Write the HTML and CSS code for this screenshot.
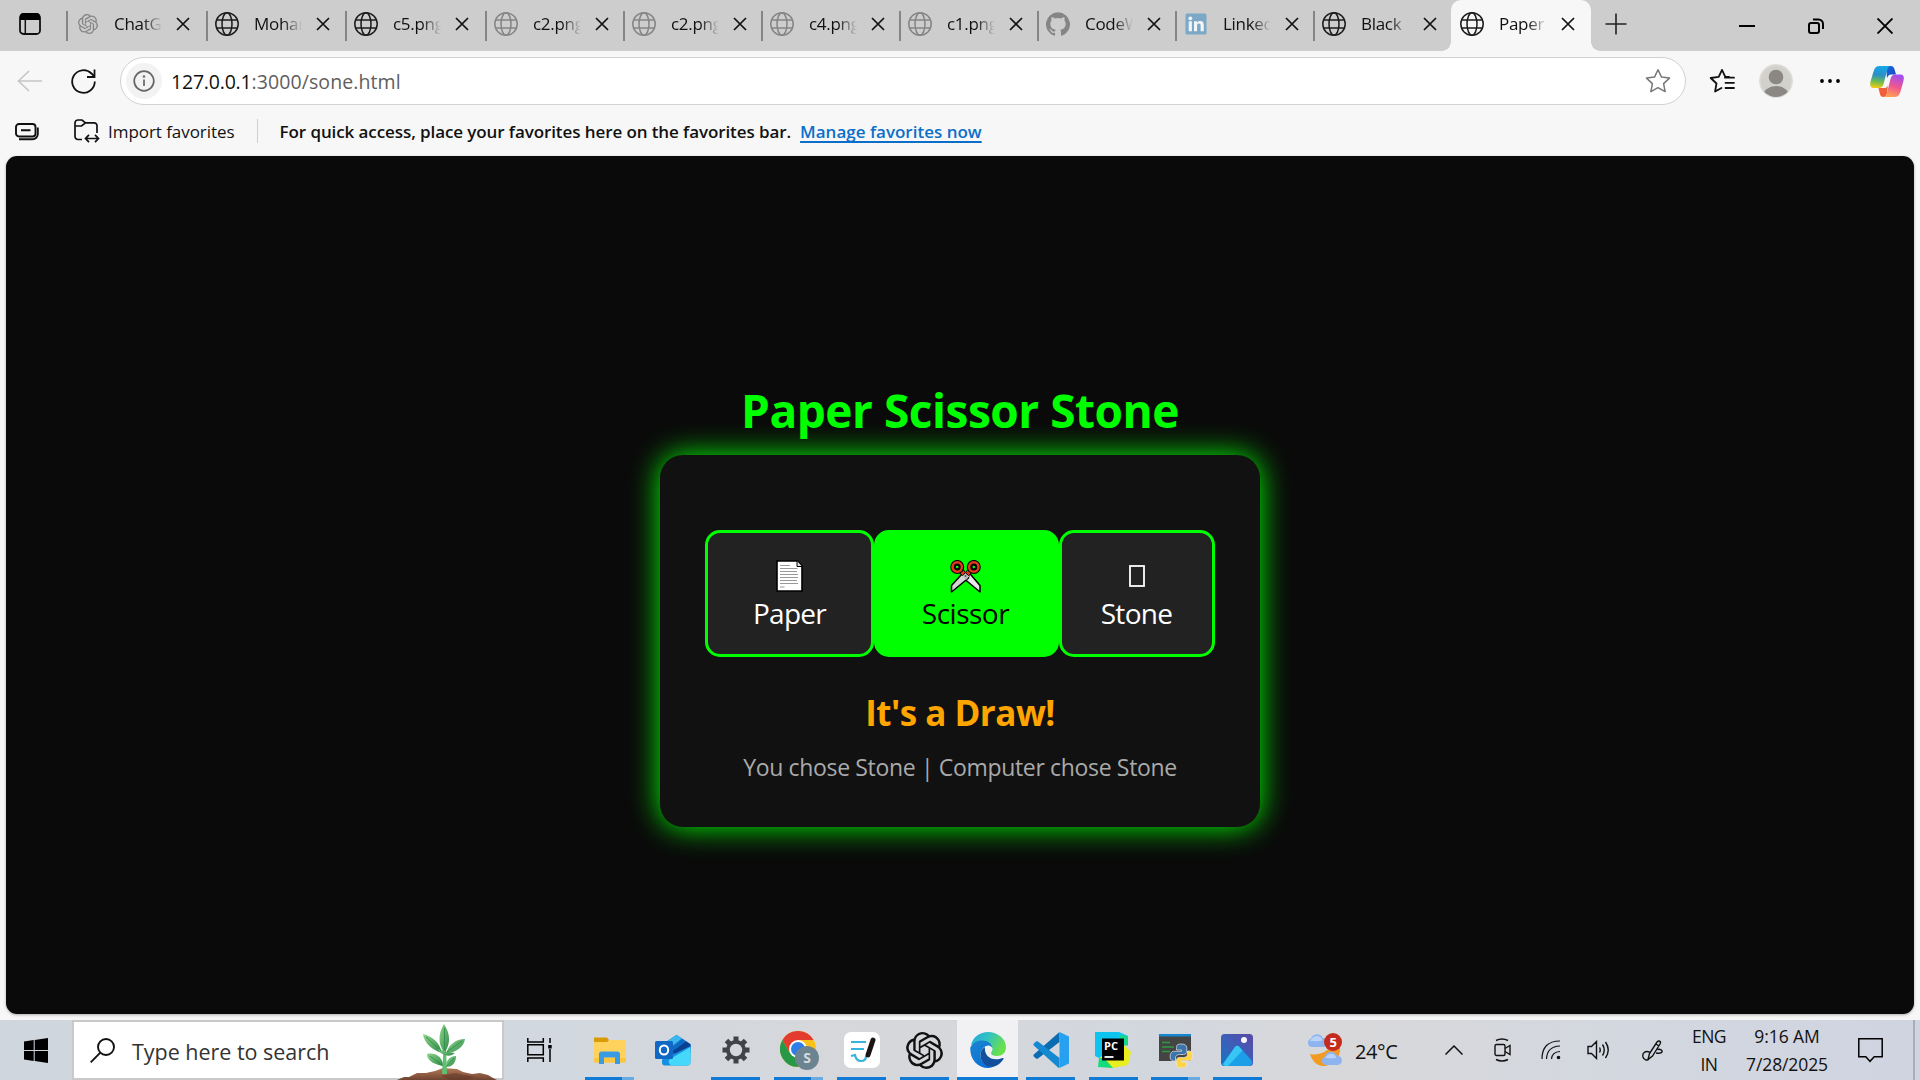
FILE: index.html
```html
<!DOCTYPE html>
<html lang="en">
<head>
<meta charset="utf-8">
<title>Paper Scissor Stone</title>
<link rel="stylesheet" href="styles.css">
</head>
<body>
<svg width="0" height="0" class="defs">
  <symbol id="globe" viewBox="0 0 24 24"><g fill="none" stroke="currentColor" stroke-width="1.5"><circle cx="12" cy="12" r="11.2"/><ellipse cx="12" cy="12" rx="5" ry="11.2"/><path d="M1.6 8h20.8M1.6 16h20.8"/></g></symbol>
  <symbol id="x" viewBox="0 0 14 14"><path d="M1 1l12 12M13 1L1 13" fill="none" stroke="#111" stroke-width="1.7"/></symbol>
  <symbol id="knot" viewBox="0 0 24 24"><path fill="currentColor" d="M22.28 9.82a5.98 5.98 0 0 0-.52-4.91 6.05 6.05 0 0 0-6.51-2.9A6.07 6.07 0 0 0 4.98 4.18a5.98 5.98 0 0 0-4 2.9 6.05 6.05 0 0 0 .74 7.1 5.98 5.98 0 0 0 .51 4.91 6.05 6.05 0 0 0 6.52 2.9A5.98 5.98 0 0 0 13.26 24a6.06 6.06 0 0 0 5.77-4.21 5.99 5.99 0 0 0 4-2.9 6.06 6.06 0 0 0-.75-7.07zm-9.02 12.61a4.48 4.48 0 0 1-2.88-1.04l.14-.08 4.78-2.76a.8.8 0 0 0 .39-.68v-6.74l2.02 1.17a.07.07 0 0 1 .04.05v5.58a4.5 4.5 0 0 1-4.49 4.5zm-9.66-4.13a4.47 4.47 0 0 1-.53-3.01l.14.09 4.78 2.76a.77.77 0 0 0 .78 0l5.84-3.37v2.33a.08.08 0 0 1-.03.06L9.74 19.95a4.5 4.5 0 0 1-6.14-1.65zM2.34 7.9a4.49 4.49 0 0 1 2.37-1.98v5.68a.77.77 0 0 0 .39.68l5.81 3.35-2.02 1.17a.08.08 0 0 1-.07 0l-4.83-2.79A4.5 4.5 0 0 1 2.34 7.87zm16.6 3.86L13.1 8.36 15.12 7.2a.08.08 0 0 1 .07 0l4.83 2.79a4.49 4.49 0 0 1-.68 8.1v-5.67a.79.79 0 0 0-.4-.66zm2.01-3.02-.14-.09-4.77-2.78a.78.78 0 0 0-.79 0L9.41 9.23V6.9a.07.07 0 0 1 .03-.06l4.83-2.79a4.5 4.5 0 0 1 6.68 4.66zM8.31 12.86 6.29 11.7a.08.08 0 0 1-.04-.06V6.07a4.5 4.5 0 0 1 7.38-3.45l-.14.08-4.78 2.76a.8.8 0 0 0-.4.68zm1.1-2.37L12 9l2.61 1.5v3L12 15l-2.6-1.5z"/></symbol>
</svg>

<header class="tabstrip">
  <svg class="workspaces" width="22" height="24" viewBox="0 0 22 24"><rect x="1" y="2" width="20" height="20" rx="3.5" fill="none" stroke="#111" stroke-width="1.8"/><path d="M1 8V5a4 4 0 0 1 4-4h12a4 4 0 0 1 4 4v3z" fill="#000"/><path d="M6.3 8v14" stroke="#111" stroke-width="1.5"/></svg>
  <div class="tab tab--140 tab--small"><svg class="tab-icon dim"><use href="#knot"/></svg><span class="tab-title">ChatG</span><svg class="tab-close"><use href="#x"/></svg></div>
  <div class="tab tab--139"><svg class="tab-icon"><use href="#globe"/></svg><span class="tab-title">Mohan</span><svg class="tab-close"><use href="#x"/></svg></div>
  <div class="tab tab--140"><svg class="tab-icon"><use href="#globe"/></svg><span class="tab-title">c5.png</span><svg class="tab-close"><use href="#x"/></svg></div>
  <div class="tab"><svg class="tab-icon dim"><use href="#globe"/></svg><span class="tab-title">c2.png</span><svg class="tab-close"><use href="#x"/></svg></div>
  <div class="tab"><svg class="tab-icon dim"><use href="#globe"/></svg><span class="tab-title">c2.png</span><svg class="tab-close"><use href="#x"/></svg></div>
  <div class="tab"><svg class="tab-icon dim"><use href="#globe"/></svg><span class="tab-title">c4.png</span><svg class="tab-close"><use href="#x"/></svg></div>
  <div class="tab"><svg class="tab-icon dim"><use href="#globe"/></svg><span class="tab-title">c1.png</span><svg class="tab-close"><use href="#x"/></svg></div>
  <div class="tab"><svg class="tab-icon dim" viewBox="0 0 24 24"><path fill="currentColor" d="M12 .3a12 12 0 0 0-3.8 23.38c.6.12.83-.26.83-.57v-2.24c-3.34.73-4.04-1.42-4.04-1.42-.55-1.38-1.34-1.75-1.34-1.75-1.08-.74.09-.73.09-.73 1.2.09 1.83 1.24 1.83 1.24 1.07 1.83 2.8 1.3 3.49 1 .1-.78.42-1.3.76-1.6-2.66-.3-5.47-1.33-5.47-5.93 0-1.3.47-2.38 1.24-3.22-.14-.3-.54-1.52.1-3.18 0 0 1.01-.32 3.3 1.23a11.5 11.5 0 0 1 6.02 0c2.28-1.55 3.29-1.23 3.29-1.23.64 1.66.24 2.88.12 3.18a4.65 4.65 0 0 1 1.23 3.22c0 4.61-2.8 5.63-5.48 5.92.42.36.81 1.1.81 2.22v3.29c0 .31.2.69.82.57A12 12 0 0 0 12 .3"/></svg><span class="tab-title">CodeW</span><svg class="tab-close"><use href="#x"/></svg></div>
  <div class="tab"><svg class="tab-icon" viewBox="0 0 24 24"><rect x="1.5" y="1.5" width="21" height="21" rx="1.5" fill="#7ba8c6"/><g fill="#f2f4f6"><circle cx="6.3" cy="6.3" r="1.9"/><path d="M4.7 9.3h3.2v10H4.7zM10 9.3h3v1.4c.6-1 1.7-1.7 3.1-1.7 3 0 3.7 2 3.7 4.6v5.7h-3.2v-5c0-1.3 0-2.7-1.7-2.7s-1.8 1.3-1.8 2.6v5.1H10z"/></g></svg><span class="tab-title">Linked</span><svg class="tab-close"><use href="#x"/></svg></div>
  <div class="tab"><svg class="tab-icon"><use href="#globe"/></svg><span class="tab-title">Black</span><svg class="tab-close"><use href="#x"/></svg></div>
  <div class="tab tab--140 tab--active"><svg class="tab-icon"><use href="#globe"/></svg><span class="tab-title">Paper</span><svg class="tab-close"><use href="#x"/></svg></div>
  <svg class="new-tab" width="22" height="22"><path d="M11 .5v21M.5 11h21" stroke="#222" stroke-width="1.6"/></svg>
  <div class="window-buttons">
    <svg width="16" height="16"><path d="M0 8h16" stroke="#000" stroke-width="2"/></svg>
    <svg width="16" height="16" fill="none" stroke="#000" stroke-width="2"><rect x="1" y="5" width="10" height="10" rx="2"/><path d="M5 1.5h5.5a4.5 4.5 0 0 1 4.500 4.5v5"/></svg>
    <svg width="16" height="16"><path d="M.5.5l15 15M15.500.5l-15 15" stroke="#000" stroke-width="1.9"/></svg>
  </div>
</header>

<nav class="toolbar">
  <svg class="back" width="25" height="22" fill="none" stroke="#c6c6c6" stroke-width="1.6"><path d="M25 11H1.5M12 1L1.500 11 12 21"/></svg>
  <svg class="reload" width="25" height="25" fill="none" stroke="#111" stroke-width="1.8"><path d="M23.800 12.500A11.300 11.300 0 1 1 20.500 4.500L23 7"/><path d="M23.500 .5V8H16"/></svg>
  <div class="address">
    <span class="site-info"><svg width="22" height="22" fill="none" stroke="#666" stroke-width="1.7"><circle cx="11" cy="11" r="9.800"/><path d="M11 9.500v6.500"/><circle cx="11" cy="6.500" r=".5"/></svg></span>
    <span class="url"><b>127.0.0.1</b>:3000/sone.html</span>
    <svg width="26" height="26" viewBox="0 0 26 26" fill="none" stroke="#777" stroke-width="1.5" stroke-linejoin="round"><path d="M13 1.800l3.500 7.300 8 1-5.900 5.500 1.500 8L13 19.700l-7.100 3.900 1.500-8L1.500 10.100l8-1z"/></svg>
  </div>
  <svg class="favs" width="26" height="26" viewBox="0 0 26 26" fill="none" stroke="#111" stroke-width="1.8" stroke-linejoin="round" stroke-linecap="round"><path d="M20 8.900l-3.700-.1L13 1.900 9.700 8.800l-8 1.200 5.800 5.500-1.400 8L12.500 20"/><path d="M16 9.700h9M16.500 14.800H25M16.500 20H25"/></svg>
  <svg class="profile" width="34" height="34" viewBox="0 0 34 34"><clipPath id="pc"><circle cx="17" cy="17" r="16"/></clipPath><circle cx="17" cy="17" r="17" fill="#dfdeda"/><circle cx="17" cy="17" r="15.500" fill="#d2d1cc"/><g fill="#8b8784" clip-path="url(#pc)"><circle cx="17" cy="13" r="7.300"/><ellipse cx="17" cy="32" rx="13" ry="10"/></g></svg>
  <svg class="more" width="20" height="4"><circle cx="2" cy="2" r="1.900"/><circle cx="10" cy="2" r="1.900"/><circle cx="18" cy="2" r="1.900"/></svg>
  <svg class="copilot" width="34" height="31" viewBox="0 0 34 31">
    <defs>
      <linearGradient id="ca" x1=".4" y1="0" x2=".3" y2="1"><stop offset="0" stop-color="#15a8e8"/><stop offset=".4" stop-color="#2a8fc8"/><stop offset=".7" stop-color="#6cbb50"/><stop offset="1" stop-color="#f5cc10"/></linearGradient>
      <linearGradient id="cb" x1=".6" y1="0" x2=".3" y2="1"><stop offset="0" stop-color="#a04ef0"/><stop offset=".5" stop-color="#ef5590"/><stop offset="1" stop-color="#ffa550"/></linearGradient>
      <linearGradient id="cc" x1="0" y1="0" x2="1" y2="1"><stop offset="0" stop-color="#1a6fe0"/><stop offset="1" stop-color="#1640b8"/></linearGradient>
    </defs>
    <path d="M16 0h5c2 0 3 1.500 3.700 4l1.300 4.500h-4.500c-3 0-4 2-4.500 4z" fill="url(#cc)"/>
    <path d="M8.500 22h6c2 0 3-1 3.500-3L17 27c-.6 2.500-1.200 4-3.500 4-2.500 0-3.200-1.500-3.800-4z" fill="#f0603a"/>
    <path d="M9.500 0H21c-2.500 0-3.300 2-4 4.500l-3.300 13c-.8 2.800-2 4.500-5 4.500H3.500C-.2 22-.3 18.500.7 15l2.800-9.500C4.800 1.800 6.200 0 9.500 0z" fill="url(#ca)"/>
    <path d="M24.500 31H13c2.500 0 3.300-2 4-4.500l3.500-13.500c.8-2.800 2-4.500 5-4.500h5c3.700 0 3.800 3.500 2.800 7l-2.800 10c-1.300 3.700-2.700 5.500-6 5.500z" fill="url(#cb)"/>
  </svg>
</nav>

<div class="favorites">
  <svg class="fav-edit" width="24" height="18" fill="none" stroke="#111" stroke-width="1.9"><rect x="1" y="1" width="19.500" height="12.500" rx="3"/><path d="M6 7.300h9.500M4 16.300h13.500a5.300 5.300 0 0 0 5.300-5.300V4.500"/></svg>
  <svg class="fav-import" width="26" height="24" fill="none" stroke="#111" stroke-width="1.7"><path d="M8 20.500H4A3 3 0 0 1 1 17.500V4a3 3 0 0 1 3-3h4l3.500 2.800H20a3 3 0 0 1 3 3V14M1 7h6.500l4-3.200"/><path d="M12 19.500h12M15 15.800l-3.500 3.700 3.500 3.700M21 15.800l3.500 3.700-3.500 3.700"/></svg>
  <span class="fav-text">Import favorites</span>
  <i class="fav-rule"></i>
  <span class="fav-hint">For quick access, place your favorites here on the favorites bar.</span>
  <a class="fav-link">Manage favorites now</a>
</div>

<main class="page">
  <h1>Paper Scissor Stone</h1>
  <section class="game">
    <div class="choices">
      <button class="choice choice--paper">
        <svg width="27" height="32" viewBox="0 0 27 32"><path d="M1 1h20.500L26 6v25H1z" fill="#fff" stroke="#000" stroke-width="1.6"/><path d="M21 1v5.500h5" fill="#ddd" stroke="#000"/><g stroke="#999" stroke-width="1"><path d="M4 5.500h10M4 8.500h17.500M4 11.500h17M4 14.500h18M4 17.500h18M4 20.500h17M4 23.500h18M4 27h4.500"/></g></svg>
        <span>Paper</span>
      </button>
      <button class="choice choice--scissor">
        <svg width="31" height="33" viewBox="0 0 31 33"><g stroke="#000" stroke-width="1.5" stroke-linejoin="round"><path d="M18.500 12L30 25.500V32L12 17z" fill="#e8e8e8"/><path d="M12 14L19 13.500 18.500 18 1.500 32v-6.500z" fill="#d4d4d4"/></g><path d="M19 11L12 15l4 5 3-3.500z" fill="#bbb"/><g stroke="#000" stroke-width="1"><path d="M8 11.500l4.500 4 3-2.800L12 8zM23 11.500l-4.500 4-3-2.800L19 8z" fill="#e5371c"/></g><g fill="#000"><ellipse cx="7.200" cy="7" rx="4.700" ry="4.800" stroke="#000" stroke-width="4.600"/><ellipse cx="23.800" cy="7" rx="4.700" ry="4.800" stroke="#000" stroke-width="4.600"/><ellipse cx="7.200" cy="7" rx="4.700" ry="4.800" stroke="#e5371c" stroke-width="2.500"/><ellipse cx="23.800" cy="7" rx="4.700" ry="4.800" stroke="#e5371c" stroke-width="2.500"/></g><g fill="#0f0"><circle cx="7.200" cy="7" r="1.300"/><circle cx="23.800" cy="7" r="1.300"/></g><circle cx="15.500" cy="16" r=".9" fill="#555"/></svg>
        <span>Scissor</span>
      </button>
      <button class="choice choice--stone">
        <svg width="16" height="32"><rect x="1" y="6" width="14" height="20" fill="none" stroke="#fff" stroke-width="1.8"/></svg>
        <span>Stone</span>
      </button>
    </div>
    <h2>It's a Draw!</h2>
    <p>You chose Stone | Computer chose Stone</p>
  </section>
</main>

<footer class="taskbar">
  <svg class="start" width="24" height="25" viewBox="0 0 24 25"><path d="M0 3.500l9.700-1.400v9.900H0zM10.700 2L24 0v12H10.700zM0 13h9.700v9.900L0 21.500zM10.700 13H24v12l-13.300-2z"/></svg>
  <div class="search">
    <svg width="25" height="25" fill="none" stroke="#111" stroke-width="1.9"><circle cx="16" cy="9" r="8"/><path d="M10.300 14.700L.7 24.300"/></svg>
    <span>Type here to search</span>
    <svg class="plant" width="102" height="56" viewBox="0 0 102 56">
      <defs><linearGradient id="leaf" x1="0" y1="0" x2="1" y2="1"><stop offset="0" stop-color="#8fd48a"/><stop offset="1" stop-color="#2e8b48"/></linearGradient><linearGradient id="soil" x1="0" y1="0" x2="0" y2="1"><stop offset="0" stop-color="#b57a58"/><stop offset="1" stop-color="#6f4330"/></linearGradient></defs>
      <path d="M0 56l7-3 5 0 8-4 9 0 9-2 8-3 14 1 6 3 9 2 8-1 8 2 5 3 4 2z" fill="url(#soil)"/>
      <path d="M44 52l14-3 20 4-10 3H54z" fill="#5d3626" opacity=".5"/>
      <path d="M45 50l1.500-26h2.500l1 26z" fill="#5fc070"/>
      <g fill="url(#leaf)"><path d="M47 28c-7-9-5-20 0-28 6 9 7 19 1 28z"/><path d="M45 29C35 26 27 19 26 10c9 2 17 9 19 19z"/><path d="M49 30c2-9 10-15 19-15-1 8-9 13-19 15z"/><path d="M46 42c-6-1-16-4-16-12 8-2 16 3 16 12z"/><path d="M49 43c0-7 4-11 10-11 0 6-3 11-10 11z"/><path d="M41 25c6 1 10 4 17 4-4 4-13 4-17-4z"/></g>
      <g stroke="#2b8a4b" stroke-width=".8" fill="none"><path d="M47.500 4v22M29 13l15 14M65 17L50 28M33 32l12 9M57 34l-7 8"/></g>
    </svg>
  </div>
  <svg class="taskview" width="26" height="24" fill="none" stroke="#000" stroke-width="1.5"><path d="M.8 0v4h15.500V0M.8 24v-4h15.500v4M.8 6.800h15.500v10H.8zM23 0v5M23 11v13"/><path d="M21.200 7h3.500v3.500h-3.500z" fill="#000" stroke="none"/></svg>

  <div class="apps">
    <div class="app run multi"><svg width="36" height="36" viewBox="0 0 36 36"><path d="M2 5.500h13l2 2.500-2 3H2z" fill="#d99a08"/><path d="M2 10h13l3-2h14.500q1.500 0 1.500 1.500V29q0 1.500-1.500 1.500h-29Q2 30.500 2 29z" fill="#ffd25e"/><path d="M2 26h32v3q0 1.500-1.500 1.500h-29Q2 30.500 2 29z" fill="#fbc53c"/><path d="M7 32V22q0-2.500 2.500-2.500h16Q28 19.500 28 22v10h-5v-6.500H12V32z" fill="#3a9be2"/></svg></div>
    <div class="app"><svg width="36" height="36" viewBox="0 0 36 36"><path d="M8 12L20.500 3.500q1-.8 2 0L35.500 12v9L10 28z" fill="#0a6cc4"/><path d="M10 11L20.500 3.500q1-.8 2 0L27 6.500 15 16z" fill="#3bb8f0"/><path d="M18 19l13-9.500 4.500 3V17L20 25z" fill="#0b3f92"/><path d="M35.500 14v16q0 3.500-3.500 3.500H10q-3 0-3-3v-3l11-5z" fill="#1590e0"/><path d="M35.500 15L15 27q-3 3 1 6.500h16q3.500 0 3.500-3.500z" fill="#45d8fa"/><rect y="9" width="18" height="18" rx="1.500" fill="#0f69c4"/><ellipse cx="9" cy="18" rx="4.200" ry="4.600" fill="none" stroke="#fff" stroke-width="2"/></svg></div>
    <div class="app run"><svg width="36" height="36" viewBox="-18 -18 36 36"><g fill="#414447"><rect x="-2.500" y="-13.500" width="5" height="27"/><rect x="-2.500" y="-13.500" width="5" height="27" transform="rotate(45)"/><rect x="-2.500" y="-13.500" width="5" height="27" transform="rotate(90)"/><rect x="-2.500" y="-13.500" width="5" height="27" transform="rotate(135)"/><circle r="10"/></g><circle r="6.200" fill="#d5d7da"/></svg></div>
    <div class="app run multi"><svg class="chrome" width="40" height="40" viewBox="0 0 40 40"><circle cx="18" cy="18" r="18" fill="#fbc116"/><path d="M18 9h15.600A18 18 0 0 0 2.400 9l7.800 13.500z" fill="#e33b2e"/><path d="M2.400 9A18 18 0 0 0 18 36l7.800-13.500L10.200 22.500z" fill="#279847"/><circle cx="18" cy="18" r="9" fill="#fff"/><circle cx="18" cy="18" r="7" fill="#2f7de9"/><circle cx="27" cy="27" r="12" fill="#6c8492"/><text x="27" y="32" text-anchor="middle" class="badge-s">S</text></svg></div>
    <div class="app run"><svg width="36" height="36" viewBox="0 0 36 36"><rect width="36" height="36" rx="7" fill="#fff"/><g fill="none" stroke="#35b4dc" stroke-width="2.2"><path d="M7 10h15M7 17h13M7 24l4-1q1 6 6 6t5-5"/></g><path d="M29 8l-5 15" stroke="#1b1414" stroke-width="5" stroke-linecap="round"/></svg></div>
    <div class="app run"><svg width="37" height="37"><use href="#knot"/></svg></div>
    <div class="app run active"><svg width="36" height="36" viewBox="0 0 36 36"><defs><linearGradient id="e1" x1="0" y1="0" x2="1" y2=".4"><stop offset="0" stop-color="#1fa5e0"/><stop offset=".5" stop-color="#33c3c0"/><stop offset="1" stop-color="#6ae04a"/></linearGradient><linearGradient id="e2" x1="0" y1="0" x2=".6" y2="1"><stop offset="0" stop-color="#1b86cf"/><stop offset="1" stop-color="#0a70d8"/></linearGradient></defs><path d="M1 13C3 5 10 0 18 0c10 0 18 7 18 15 0 6-4 9-9 9-4 0-6-1-6-3 0-1 1.500-2 1.500-4 0-3-3-6-9-6-6 0-11 1-12.500 2z" fill="url(#e1)"/><path d="M.2 16C2 11 7 8.500 12 8.500c6 0 10 3 10.500 8 0-1-2-3-4-3-4 0-8 4-8 10 0 6 5 11 12 11.500-2 .7-3 1-4.500 1C8 36 0 28 .2 16z" fill="url(#e2)"/><path d="M15 15c-3 1.500-4.500 4.500-4.500 8.500 0 7 6 12 12 11.500 5-1 9-4.500 11-8 .4-1-.4-1.300-1-1-2 1-4 1.300-6.500 1.300-7 0-12-5-11-12.300z" fill="#124f9c"/></svg></div>
    <div class="app run"><svg width="36" height="36" viewBox="0 0 36 36"><path d="M26.500 0v10L5 26.500q-1 .7-2 0L.8 24.500Q0 23.500.8 22.500z" fill="#0a6cb0"/><path d="M.8 11.500L3 9.500q1-.7 2 0L26.500 26v10q-1 0-2-1L.8 13.500Q0 12.500.8 11.500z" fill="#1489d2"/><path d="M26.500 0L36 4.500v27L26.500 36z" fill="#27a0f0"/></svg></div>
    <div class="app app--narrow run"><svg width="36" height="36" viewBox="0 0 36 36"><path d="M0 0h24l9 4v8L6 27 0 24z" fill="#0cc4ef"/><path d="M24 3l9 1v10l-9-4z" fill="#12d98a"/><path d="M4 26l24-14 8 8-3 13-16 3-13-2z" fill="#e9ef1c"/><path d="M4 26l5 0 9 10-15-1z" fill="#14db7b"/><rect x="7" y="6.500" width="22" height="22"/><text x="9" y="18" class="pc">PC</text><path d="M9.500 25h9" stroke="#fff" stroke-width="1.8"/></svg></div>
    <div class="app app--narrow run multi"><svg width="36" height="36" viewBox="0 0 36 36"><rect x="2" y="2" width="32" height="27" fill="#444"/><path d="M2 2h32v2.500H2z" fill="#1685cd"/><path d="M5 10.500h8M5 15h12M5 19.500h8" stroke="#2c9a3c" stroke-width="1.3"/><path d="M24 12c-5 0-4.500 2-4.500 6h5v1.300h-8c-4 0-5 9.700 0 9.700h2v-3c0-2.500 2-3.500 4-3.500h4c2 0 3.300-1.300 3.300-3.300V16c0-3-2-4-5.800-4z" fill="#3a76ad" stroke="#e8e8e8" stroke-width=".7"/><path d="M25 36c5 0 4.500-2 4.500-6h-5v-1.300h8c4 0 4-9.700 0-9.700h-2v3c0 2.500-2 3.500-4 3.500h-4c-2 0-3.300 1.300-3.300 3.300V32c0 3 2 4 5.800 4z" fill="#ffd545" stroke="#e8e8e8" stroke-width=".7"/></svg></div>
    <div class="app app--narrow run"><svg width="32" height="32" viewBox="0 0 32 32"><defs><linearGradient id="ph" x1="0" y1="1" x2="1" y2="0"><stop offset="0" stop-color="#1275c8"/><stop offset=".5" stop-color="#3d5fb8"/><stop offset="1" stop-color="#5b48a5"/></linearGradient></defs><rect width="32" height="32" rx="3.500" fill="url(#ph)"/><path d="M1 31L14 13q2-2.500 4.500 0L31 27v1q0 4-4 4H4q-2 0-3-1z" fill="#1a9fe8"/><path d="M2 30L14 13q2-2.500 4.500 0l3 3.500L7 32H4z" fill="#38c6f4"/><circle cx="23" cy="6" r="3" fill="#f4f4fa"/></svg></div>
  </div>

  <div class="weather">
    <svg width="37" height="35" viewBox="0 0 37 35"><path d="M4 21c8 2 18-2 22-10 3 0 7 1 8 4 1 10-8 18-17 18-6 0-11-5-13-12z" fill="#f39a22"/><g fill="#8db4ef"><path d="M5 14a4.500 4.500 0 0 1 0-8.500C6 1 14-1 17 5c5 0 6 9 0 9z"/><path d="M19 32a4.500 4.500 0 0 1 0-8.500c2-6 9-6 12-1 6 0 7 9.500 0 9.500z"/></g><g fill="#b9d2f8"><path d="M4 8c3-5 9-7 12-2 2 3-8 2-12 2zM19 25c3-5 9-6 11-1 2 2-7 1-11 1z"/></g><circle cx="27" cy="9" r="9" fill="#c42b1c"/><text x="27" y="14" text-anchor="middle" class="badge-5">5</text></svg>
    <span>24°C</span>
  </div>

  <div class="tray">
    <svg width="18" height="10" fill="none" stroke="#111" stroke-width="1.5"><path d="M.5 9.500L9 1l8.500 8.500"/></svg>
    <svg width="17" height="24" fill="none" stroke="#111" stroke-width="1.4"><rect x="1" y="6.500" width="10" height="11" rx="1.500"/><path d="M11 10.500l5-3v9l-5-3M2 2.500q6-3 12 0M2 21.500q6 3 12 0"/></svg>
    <svg width="20" height="20" fill="none" stroke="#111" stroke-width="1.2"><path d="M1 19Q1 1 19 1M5.500 19Q6 6.500 19 6M10.500 19q.5-7 8.500-7.500"/><circle cx="17.500" cy="17.500" r="1.200" fill="#111"/></svg>
    <svg width="23" height="20" fill="none" stroke="#111" stroke-width="1.4"><path d="M1 6.500h3.500L9.500 1.500v17l-5-5H1zM12.500 7.500q1.500 2.500 0 5M15.500 4.500q3.500 5.500 0 11M18.500 2q5.500 8 0 16"/></svg>
    <svg width="21" height="21" fill="none" stroke="#111" stroke-width="1.4"><path d="M6 19.500l1.500-6L15 2q2-2 3.500 0 0 1-.5 2l-7.500 12zM7.500 12C3 10.500 0 13 1 17c1 3 4 4 6 2M15.500 9.500c3-1 5 1 4.500 2.500s-3 1.500-6 1M14 4l3 2"/></svg>
  </div>
  <div class="lang"><span>ENG</span><span>IN</span></div>
  <div class="clock"><span>9:16 AM</span><span>7/28/2025</span></div>
  <svg class="notify" width="25" height="25" fill="none" stroke="#000" stroke-width="1.5"><path d="M.8.8h23.400v18h-8l-4.200 4.500-4.200-4.500h-7z"/></svg>
  <i class="show-desktop"></i>
</footer>
</body>
</html>
```
FILE: styles.css
```css
* { box-sizing: border-box; }
body {
  margin: 0;
  width: 1920px;
  height: 1080px;
  overflow: hidden;
  display: flex;
  flex-direction: column;
  background: #f7f7f7;
  font-family: "Open Sans", "Noto Sans", sans-serif;
  color: #111;
}
svg { display: block; flex: none; }
.defs { position: absolute; }

/* tab strip */
.tabstrip {
  display: flex;
  align-items: center;
  height: 51px;
  padding-bottom: 3px;
  background: #cdcdcd;
}
.workspaces { margin: 0 25px 0 19px; }
.tab {
  display: flex;
  align-items: center;
  width: 138px;
  height: 48px;
  padding-left: 9px;
  background: linear-gradient(#858585, #858585) 0 11px / 2px 30px no-repeat;
}
.tab--139 { width: 139px; }
.tab--140 { width: 140px; }
.tab--active {
  position: relative;
  align-self: flex-start;
  height: 51px;
  padding-bottom: 3px;
  background: #f7f7f7;
  border-radius: 10px 10px 0 0;
}
.tab--active::before,
.tab--active::after {
  content: "";
  position: absolute;
  bottom: 0;
  width: 9px;
  height: 9px;
}
.tab--active::before { left: -9px; background: radial-gradient(circle at 0 0, transparent 8.5px, #f7f7f7 9px); }
.tab--active::after { right: -9px; background: radial-gradient(circle at 100% 0, transparent 8.5px, #f7f7f7 9px); }
.tab-icon { width: 24px; height: 24px; color: #1c1c1c; }
.tab--small .tab-icon { width: 20px; height: 20px; margin: 0 1px 0 3px; }
.dim { color: #858585; }
.tab-title {
  width: 48px;
  margin: 0 14px 0 15px;
  overflow: hidden;
  white-space: nowrap;
  font-size: 17px;
  letter-spacing: -0.3px;
  line-height: 28px;
  -webkit-mask-image: linear-gradient(90deg, #000 60%, transparent);
  mask-image: linear-gradient(90deg, #000 60%, transparent);
}
.tab-close { width: 14px; height: 14px; }
.new-tab { margin-left: 14px; }
.window-buttons { display: flex; gap: 53px; margin: 3px 27px 0 auto; }

/* toolbar */
.toolbar {
  display: flex;
  align-items: center;
  height: 54px;
  padding-top: 6px;
}
.back { margin: 0 29px 0 17px; }
.reload { margin-right: 24px; }
.address {
  display: flex;
  align-items: center;
  width: 1566px;
  height: 48px;
  padding: 0 14px 0 5px;
  background: #fff;
  border: 1.5px solid #d2d2d2;
  border-radius: 24px;
}
.site-info {
  display: grid;
  place-items: center;
  width: 36px;
  height: 36px;
  border-radius: 50%;
  background: #f3f3f3;
}
.url { margin: 0 auto 0 9px; font-size: 19.5px; letter-spacing: 0.1px; color: #5e5e5e; }
.url b { font-weight: 400; color: #111; letter-spacing: -0.2px; }
.favs { margin: 0 24px 0 23px; }
.more { margin: 0 30px 0 27px; }

/* favorites bar */
.favorites {
  display: flex;
  align-items: center;
  height: 51px;
  font-size: 17px;
  white-space: nowrap;
}
.favorites span, .favorites a { padding-top: 1px; }
.fav-edit { margin: 2px 35px 0 15px; }
.fav-import { margin-right: 8px; }
.fav-text { letter-spacing: -0.05px; }
.fav-rule { width: 1px; height: 24px; margin: 0 22px 0 22px; background: #cfcfcf; }
.fav-hint { font-weight: 600; letter-spacing: -0.09px; margin-right: 9px; }
.fav-link {
  font-weight: 600;
  color: #0b6fc9;
  text-decoration: underline;
  text-decoration-thickness: 1.5px;
  text-underline-offset: 3px;
  text-decoration-skip-ink: none;
}

/* page */
.page {
  display: flex;
  flex-direction: column;
  align-items: center;
  height: 858px;
  margin: 0 6px 6px;
  padding-top: 219px;
  background: #0a0a0a;
  border-radius: 11px;
  box-shadow: 0 1px 3px rgba(0, 0, 0, .3);
}
h1 {
  position: relative;
  z-index: 1;
  margin: 0;
  height: 80px;
  line-height: 70px;
  font-size: 46px;
  letter-spacing: -0.48px;
  color: #0f0;
}
.game {
  display: flex;
  flex-direction: column;
  align-items: center;
  width: 600px;
  height: 372px;
  padding-top: 75px;
  background: #111;
  border-radius: 23px;
  box-shadow: 0 0 30px #0f0;
}
.choices { display: flex; }
.choice {
  display: flex;
  flex-direction: column;
  align-items: center;
  gap: 1px;
  height: 127px;
  padding: 27px 0 0;
  border: 3px solid #0f0;
  border-radius: 15px;
  background: #222;
  color: #fff;
  font: 28px/40px "Open Sans", "Noto Sans", sans-serif;
  letter-spacing: -0.7px;
}
.choice--paper { width: 169px; }
.choice--scissor { width: 185px; gap: 0; padding-right: 2px; background: #0f0; color: #000; letter-spacing: -0.5px; }
.choice--stone { width: 156px; padding-right: 1px; }
h2 {
  margin: 32px 0 14px;
  font-size: 35px;
  line-height: 48px;
  letter-spacing: -0.5px;
  color: #ffa500;
}
.game p {
  margin: 0;
  font-size: 23px;
  line-height: 32px;
  letter-spacing: -0.34px;
  color: #aaa;
}

/* taskbar */
.taskbar {
  display: flex;
  align-items: center;
  height: 60px;
  background: linear-gradient(90deg, #cfd6de 0, #d2d8df 30%, #d6d7da 46%, #d2d7de 60%, #d8d8da 70%, #d3d7df 84%, #cfd4e1 100%);
}
.start { margin: 0 24px; }
.search {
  position: relative;
  display: flex;
  align-items: center;
  align-self: stretch;
  width: 432px;
  padding: 0 0 0 16px;
  background: #fff;
  border: 2px solid #c9c9c9;
}
.search span { margin: 3px 0 0 17px; font-size: 21.5px; color: #333; letter-spacing: -0.02px; }
.plant { position: absolute; right: 3px; bottom: -2px; }
.taskview { margin: 0 25px 0 23px; }
.apps { display: flex; align-self: stretch; }
.app {
  position: relative;
  display: grid;
  place-items: center;
  width: 61px;
  margin: 0 1px;
}
.app--narrow { width: 60px; }
.chrome { margin: 2px 0 0 2px; }
.run::after {
  content: "";
  position: absolute;
  left: 6px;
  bottom: 0;
  width: 49px;
  height: 3px;
  background: #0f7bd6;
}
.multi::after { background: linear-gradient(90deg, #0f7bd6 37px, #68aae2 37px); }
.active { background: #f1f1f3; }
.active::after { left: 0; width: 61px; }
.badge-s { font: 700 14px "Open Sans", sans-serif; fill: #d5dbdf; }
.badge-5 { font: 700 13px "Open Sans", sans-serif; fill: #fff; }
.pc { font: 700 11px "Open Sans", sans-serif; fill: #fff; }
.weather { display: flex; align-items: center; margin-left: 38px; font-size: 20px; letter-spacing: -0.4px; }
.weather span { margin: 2px 0 0 12px; }
.tray { display: flex; align-items: center; margin-left: auto; }
.tray svg:nth-child(2) { margin-left: 31px; }
.tray svg:nth-child(3) { margin-left: 30px; }
.tray svg:nth-child(4) { margin-left: 26px; }
.tray svg:nth-child(5) { margin-left: 32px; }
.lang, .clock {
  display: flex;
  flex-direction: column;
  align-items: center;
  font-size: 17.5px;
  line-height: 28px;
  letter-spacing: -0.1px;
}
.lang { width: 40px; margin-left: 26px; letter-spacing: -0.6px; }
.clock { width: 90px; margin-left: 13px; }
.notify { margin: 0 30px 0 26px; }
.show-desktop { width: 7px; align-self: stretch; border-left: 2px solid #a9adb6; }
```
